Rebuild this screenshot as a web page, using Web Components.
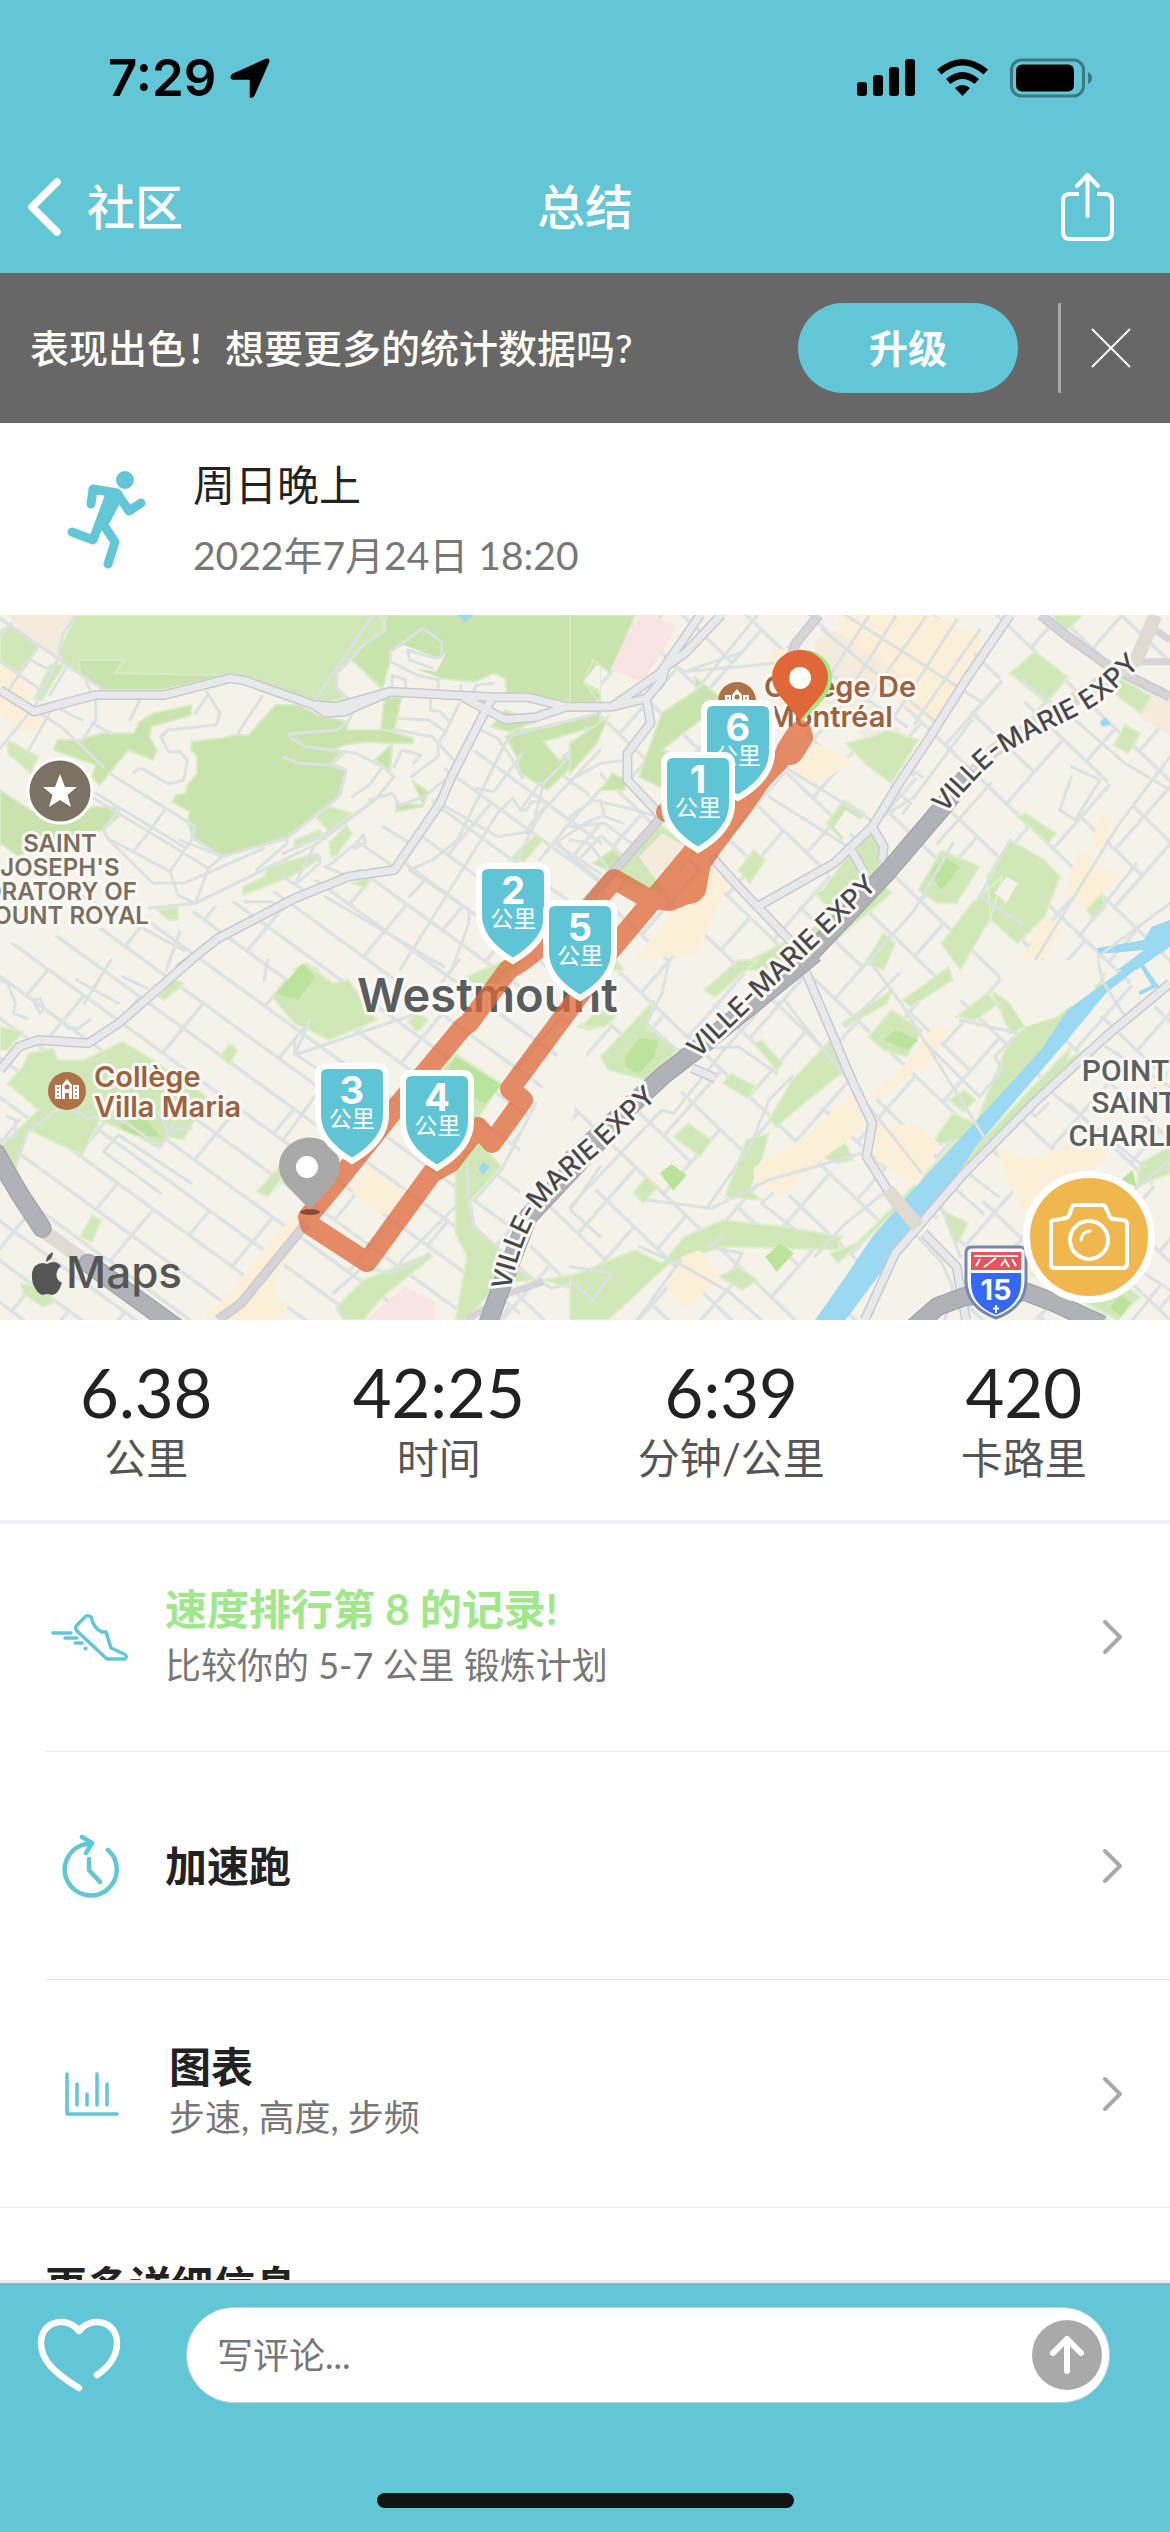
<!DOCTYPE html>
<html lang="zh-CN">
<head>
<meta charset="utf-8">
<title>总结</title>
<style>
  body { margin: 0; background: #fff; font-family: Lato, "Noto Sans CJK SC", sans-serif; color: #222; }
</style>
</head>
<body>
<run-summary></run-summary>
<script>
const define = (name, html) => {
  const t = document.createElement('template');
  t.innerHTML = html;
  customElements.define(name, class extends HTMLElement {
    constructor() {
      super();
      this.attachShadow({ mode: 'open' }).append(t.content.cloneNode(true));
    }
  });
};

define('status-bar', `
<style>
  :host { display: flex; justify-content: space-between; align-items: center; height: 44px; padding: 56px 77px 40px 108px; color: #000; }
  div { display: flex; align-items: center; }
  time { font: 600 51px/44px Inter, sans-serif; }
  .left { gap: 14px; } .right { gap: 22px; }
  svg { display: block; }
</style>
<div class="left"><time>7:29</time>
  <svg width="40" height="40" viewBox="0 0 40 40"><path d="M36 1.500Q39.500.5 38.500 4L24 37q-1.200 2.600-3.500 2V21H2.800Q-.5 19.500 2.800 16.500Z" stroke="#000" stroke-width="1.500"/></svg></div>
<div class="right">
  <svg width="58" height="38" viewBox="0 0 58 38"><rect y="23" width="10" height="14" rx="3"/><rect x="16" y="16" width="10" height="21" rx="3"/><rect x="32" y="8" width="10" height="29" rx="3"/><rect x="48" width="10" height="37" rx="3"/></svg>
  <svg width="51" height="38" viewBox="0 0 51 38"><path d="M0 10.500Q25.500-10.500 51 10.500L46.500 15.500Q25.500-2.500 4.500 15.500ZM9 20Q25.500 6 42 20L37.500 25Q25.500 15 13.500 25ZM18 29Q25.500 23 33 29L25.500 37Z"/></svg>
  <svg width="83" height="40" viewBox="0 0 83 40"><rect x="1.500" y="2" width="72" height="36" rx="10" fill="none" stroke="#3c7983" stroke-width="3"/><rect x="6" y="6.500" width="58" height="27" rx="6"/><path d="M78 14q4 2 4 6t-4 6Z" fill="#3c7983"/></svg>
</div>`);

define('nav-bar', `
<style>
  :host { display: grid; grid-template-columns: 1fr auto 1fr; align-items: center; height: 133px; padding: 0 26px; color: #fff; font-size: 48px; line-height: 60px; font-weight: 500; }
  a { display: flex; align-items: center; gap: 24px; color: inherit; text-decoration: none; }
  h1 { margin: 0; font: inherit; }
  button { justify-self: end; padding: 0 28px 0 0; border: 0; background: none; color: inherit; }
  svg { display: block; fill: none; stroke: currentColor; stroke-linecap: round; stroke-linejoin: round; }
</style>
<a href="#community"><svg width="37" height="60" viewBox="0 0 37 60"><path d="M31 5 6 30l25 25" stroke-width="7.500"/></svg>社区</a>
<h1>总结</h1>
<button aria-label="分享"><svg width="56" height="70" viewBox="0 0 56 70"><path d="M19 22h-9q-7 0-7 7v31q0 7 7 7h35q7 0 7-7V29q0-7-7-7h-8" stroke-width="4" stroke-linecap="butt"/><path d="M27.500 44V4M17 14 27.500 3 38 14" stroke-width="4"/></svg></button>`);

define('upgrade-banner', `
<style>
  :host { display: flex; align-items: center; height: 150px; padding: 0 39px 0 30px; background: #676767; color: #fffef6; font-size: 39px; line-height: 50px; font-weight: 500; }
  p { flex: 1; margin: 0; }
  button { border: 0; padding: 0; background: none; color: #fff; font: inherit; }
  .up { width: 220px; height: 90px; border-radius: 45px; background: #62c6d6; font-weight: 700; margin-right: 40px; }
  .close { height: 90px; padding-left: 30px; border-left: 3px solid #a9a9a9; }
  svg { display: block; }
</style>
<p><slot></slot></p><button class="up">升级</button>
<button class="close" aria-label="关闭"><svg width="40" height="40" viewBox="0 0 40 40" stroke="#fff" stroke-width="2"><path d="M1 1 39 39M39 1 1 39"/></svg></button>`);

define('activity-header', `
<style>
  :host { display: flex; align-items: center; box-sizing: border-box; height: 192px; padding: 2px 66px 0; gap: 45px; background: #fff; }
  svg { display: block; }
  h2, p { margin: 0; font-weight: 400; }
  h2 { font-size: 42px; line-height: 62px; color: #222; }
  p { font-size: 39px; line-height: 62px; margin-top: 8px; color: #777; }
</style>
<svg width="82" height="102" viewBox="66 471 82 102" fill="none" stroke="#62c6d6" stroke-width="9" stroke-linecap="round" stroke-linejoin="round"><circle cx="125" cy="482" r="9" fill="#62c6d6" stroke="none"/><path d="M91 506 93 491 117 495 129 513 141 505M72 534 93 542 109 499M103 526 115 544 108 566"/><path d="M105 493Q119 490 121 501L109 524 100 533 96 530 106 502Z" fill="#62c6d6" stroke-width="2"/></svg>
<div><h2><slot name="title"></slot></h2><p><slot name="date"></slot></p></div>`);

define('km-pin', `
<style>
  :host { position: absolute; display: block; width: 74px; height: 102px; color: #fff; text-align: center; }
  svg { position: absolute; inset: 0; }
  div { position: relative; padding-top: 10px; }
  b { display: block; font: 700 38px/34px Inter, sans-serif; }
  span { display: block; font-size: 23px; line-height: 22px; }
</style>
<svg width="74" height="102" viewBox="0 0 74 102"><path d="M12 3h50q9 0 9 9v40q0 26-34 46Q3 78 3 52V12q0-9 9-9Z" fill="#5fc5d6" stroke="#fff" stroke-width="6"/></svg>
<div><b><slot></slot></b><span>公里</span></div>`);

define('route-map', `
<style>
  :host { display: block; position: relative; height: 705px; overflow: hidden; background: #f5f2ea; }
  .base { position: absolute; inset: 0; width: 100%; height: 100%; }
  .base g path { vector-effect: non-scaling-stroke; }
  .g { fill: #d0e8b8; stroke: #dcefc9; stroke-width: 2; } .d { fill: #c8e3ac; stroke: #d8ecc3; stroke-width: 2; } .b { fill: #bce39c; }
  .y { fill: #fbefd8; } .p { fill: #f8e4e2; } .e { fill: #f4ebdc; } .l { fill: #f5f2ea; } .w { fill: #9bd8f2; }
  .m { fill: none; stroke: #dce1e2; stroke-width: 3; stroke-linejoin: round; stroke-linecap: round; }
  .c, .f { fill: none; stroke-linejoin: round; }
  .c { stroke: #cacacd; stroke-width: 10; } .f { stroke: #e8e9ec; stroke-width: 7; }
  .r2 { stroke: #d5d5d9; }
  .x { fill: none; stroke: #b1b2b8; stroke-width: 17; stroke-linejoin: round; }
  .xc { fill: none; stroke: #9c9da2; stroke-width: 19; stroke-linejoin: round; }
  .t { fill: none; stroke: #dfdbd0; stroke-width: 14; }
  text { font-family: Inter, sans-serif; font-weight: 600; paint-order: stroke; stroke: #faf9f5; stroke-width: 6px; stroke-linejoin: round; }
  .br { font-size: 29px; fill: #9c6240; } .sj { font-size: 24px; fill: #79705f; text-anchor: middle; }
  .ex { font-size: 27px; font-weight: 500; fill: #48484a; }
  .ps { font-family: Roboto, sans-serif; font-weight: 500; font-size: 30px; fill: #5c5f60; text-anchor: middle; }
  .wm { font-size: 47px; fill: #5a5d5e; }
  .ap { font-size: 44px; font-weight: 500; fill: #555; stroke: none; }
  .sh { font-size: 29px; font-weight: 700; fill: #fff; stroke: none; text-anchor: middle; }
  .pin { position: absolute; }
  button { position: absolute; left: 87.4%; top: 556px; width: 132px; height: 132px; padding: 0; border: 7px solid #fff; border-radius: 50%; background: #f1b74f; display: grid; place-items: center; }
</style>
<svg class="base" viewBox="0 0 1170 705" preserveAspectRatio="xMidYMid slice">
  <defs>
    <pattern id="gw" width="190" height="132" patternUnits="userSpaceOnUse" patternTransform="matrix(.81 .59 .64 -.77 20 10)"><path d="M0 2H190M0 34H190M0 66H190M0 100H190M3 0V66M96 66V132M140 0V34M52 100V132" stroke="#dde2e3" stroke-width="3.500"/></pattern>
    <pattern id="ge" width="150" height="130" patternUnits="userSpaceOnUse" patternTransform="matrix(.72 .69 .66 -.75 640 20)"><path d="M0 2H150M0 44H88M34 88H150M3 0V88M50 44V130M88 0V88M120 88V130" stroke="#dde2e3" stroke-width="3.500"/></pattern>
    <path id="e1" d="M944 199C975 165 985 153 1003 140S1060 110 1084 97S1120 70 1158 32"/>
    <path id="e2" d="M698 444 890 260"/>
    <path id="e3" d="M510 676C518 637 529 612 541 594S578 556 600 537L674 467"/>
  </defs>
  <path d="M0 330 180 300 410 240 450 140 560 120 600 200 610 330 520 520 520 705H0Z" fill="url(#gw)"/>
  <path d="M600 0H1170V705H500L560 560 610 330 600 200Z" fill="url(#ge)"/>

  <g transform="matrix(.3827 0 0 .3333 0 -5)">
    <path class="g" d="M165 15H1568V290L1380 255 1325 250 1320 205 1290 190 1240 215 1150 205 1060 165 1020 150 995 235 920 150 880 190 880 235 905 265 820 285 640 215 600 200 420 240 270 240 170 165 150 130 200 15Z"/>
    <path class="d" d="M1010 15H1568V160L1525 220 1568 250V290L1380 255 1325 250 1320 205 1290 190 1240 215 1150 205 1060 165 1020 150 1000 235 920 150 950 105 1000 65ZM205 150H325L300 190 600 195 420 240H270L210 195Z"/>
    <path class="l" d="M1020 125 1055 105 1150 145 1170 120 1140 185 1080 175 1150 205 1060 185 1020 160ZM1568 150 1525 215 1568 240Z"/>
    <path class="w" d="M1195 15H1238L1215 35Z"/>
    <path class="d" d="M500 395 580 385 610 375H650L720 285 780 285 830 315 910 335 905 360H1010L1080 385V400H1020L960 395 900 405 870 420 900 430 870 460 905 480 890 555 750 680 580 740 510 690 490 640 495 605 450 575 460 555 485 550 490 525 515 490V440L500 420Z"/>
    <path class="d" d="M150 390H210L265 370H350L365 335 400 310 500 285V315L395 350 390 380 410 420 400 450 335 420 260 525 240 500 250 465 140 420ZM0 540 80 600 180 640 240 590H300L310 620 270 660 100 700 50 740 0 700ZM1320 380 1350 360 1440 350 1568 310V345L1420 395 1460 450 1540 420 1430 540 1360 490 1350 440ZM1285 350 1320 300 1400 335 1330 365ZM1005 260H1050L1030 360H995ZM980 450 1025 400 1020 480ZM1035 605V580L1105 585 1080 515 1120 545 1105 590Z"/>
    <path class="g" d="M0 60 30 45 100 110 50 190 0 150ZM130 165 170 160 110 270 90 265ZM825 620 860 590 920 610 860 665ZM765 720 770 690 835 660 850 680ZM865 740 860 700 905 645 920 670 880 735ZM635 855V830L690 800 700 770 830 730 840 745 760 800ZM920 820 970 800 955 835ZM410 900 465 890V930H440ZM1330 750 1400 675 1420 690 1370 755ZM20 390 100 440 80 490 20 430ZM1550 1000 1568 990V1080H1500ZM765 1080 800 1060 835 1080Z"/>
    <path class="e" d="M25 15H200L165 70 145 140 110 110 50 60Z"/><path class="y" d="M0 165 90 220 75 280 115 330 100 360 50 370 0 310Z"/>
    <path class="m" d="M0 25 270 240M0 155 120 250M100 110 20 245M200 15 165 70 150 150 90 290 0 415M80 150 130 180M175 170 130 255M225 215 235 240M0 80 30 40M90 300 160 350 270 470M130 310 70 430M215 390 250 330V255M240 340 290 370M160 300 215 330M365 270 340 330M540 245 575 310 565 345 440 360 420 380 440 425H470L490 450 480 510 440 522 370 475 350 485M685 260 635 345 620 375M540 260 510 310"/>
    <path class="m" d="M975 15 820 275M995 15 1008 60 950 105 880 190V235L910 265M920 310 910 335 880 360 755 372 760 385 800 410 930 430 1000 470 1030 500 980 570 860 665 740 730M740 440 780 460 860 465 905 480 885 560 750 685 580 740M500 680 580 740 545 775 510 880 390 895M580 740 470 690M750 685V700L670 780M860 465 890 430M1000 470 965 525 920 560M1105 55 1155 95V140L1140 145 1065 120 1070 150 1130 175M1105 55 1020 125V155L1090 195 1145 210V240M1025 235V195L1060 210V235M1205 225V250M1235 250 1245 225 1290 220M1125 265V300L1150 305 1175 335M1040 325 1120 330 1165 365M1035 360 1130 380 1190 455M1200 280 1165 365 1145 400V440L1075 500M1050 420 1100 435 1080 460M1050 420 1030 470M965 570 1025 550 1045 585 1110 560 1165 505M1250 355 1300 385 1340 450 1365 505"/>
    <path class="m" d="M285 490 510 650 500 690 445 785 465 855 510 880M250 550 480 710M245 565 545 775M310 600 270 660 285 690 400 820 485 818 690 715M430 600 380 680 350 720M290 690 445 785M510 880 830 700 980 570M1000 650 1065 695M850 770 910 800M740 800 800 845M825 700 780 800 775 820M800 740H835V760L775 820M855 770 930 700 950 675 955 700 925 715M940 700 1030 770M1150 580 1300 680 1385 665 1420 600 1568 420M1568 310 1420 350 1340 375 1320 400 1195 690 1130 750 1070 780 1160 850 1250 920 1360 1040M1340 565 1300 610 1170 850 1045 1080M1340 565 1360 600H1375L1390 575H1430M1245 535 1290 545 1365 430M1410 520 1360 600M1568 340 1480 450 1420 520 1390 660 1350 750M1568 540 1480 650 1410 750M1568 620 1530 640 1450 700 1568 790M1530 350V390L1470 440M1460 700 1490 740 1568 810M1520 740 1568 680M1110 810 1070 860M1225 895V940L1180 1080"/>
    <path class="m" d="M200 850 480 1020M470 965 435 1080M640 875H710L740 900M850 860 1160 1070"/>
    <path class="c" d="M0 240 90 305 150 285 250 255H430L600 205 640 212 820 285 880 290 1020 245 1290 262H1380L1480 290 1568 292M820 285 850 308 900 305 1020 245M1210 262 1320 328 1400 322 1480 290M1285 265 1180 500 1150 580 1030 780 910 800 770 865 570 985 465 1080"/>
    <path class="f" d="M0 240 90 305 150 285 250 255H430L600 205 640 212 820 285 880 290 1020 245 1290 262H1380L1480 290 1568 292M820 285 850 308 900 305 1020 245M1210 262 1320 328 1400 322 1480 290M1285 265 1180 500 1150 580 1030 780 910 800 770 865 570 985 465 1080"/>
  </g>
  <g transform="matrix(.3827 0 0 .3333 570 -5)">
    <path class="d" d="M0 15H170L105 190 60 150 35 215 75 275 0 280Z"/><path class="p" d="M180 15H215L280 50 190 215 105 180Z"/>
    <path class="y" d="M700 15H940L1080 80 950 340 720 180ZM525 120 600 110 720 200 600 400 520 330ZM640 400 740 450 640 530 580 490ZM1330 720 1440 800 1350 900 1290 850ZM1390 610 1420 630 1390 720 1360 700ZM360 760 420 810 330 1030 170 1050 270 900ZM1240 920 1290 950 1230 1060 1180 1050Z"/>
    <path class="e" d="M690 60 860 190 760 250 870 370 790 400 650 260 640 90ZM1500 240 1568 250V380L1490 320Z"/>
    <path class="m" d="M720 15 1080 280M660 60 960 340M640 160 880 350M780 20 620 300M850 20 690 320M930 20 740 330M1010 30 820 370M1070 60 900 340"/>
    <path class="d" d="M180 500 240 310 330 240 325 200 390 260 340 330 240 420 330 460 250 540ZM80 540 110 490 150 510 140 540ZM0 400 100 320 70 400 0 490ZM60 760 110 720 160 760 120 790Z"/>
    <path class="g" d="M110 790 230 640 330 720 240 850 150 820ZM1150 190 1215 125 1300 200 1245 280ZM1400 230 1430 200 1520 260 1490 310ZM1450 345 1490 370 1460 430 1420 405ZM720 400 790 380 830 360 910 390 840 520 780 470ZM670 640 715 570 770 610 710 690ZM660 840 790 640 830 720 780 830 690 910 640 850ZM910 840 970 720 1070 770 1010 880 960 880ZM1170 620 1190 610 1270 670 1250 700ZM1090 800 1150 690 1240 750 1280 800 1240 920 1170 1000 1100 930ZM970 1000 1050 880 1130 800 1100 920 1020 1080ZM1260 15H1340L1290 70ZM770 1060 820 970 850 1000 820 1080ZM440 780 480 720 510 750 470 820ZM1350 900 1390 850 1400 890 1370 930ZM0 1080 90 1000 140 1080ZM420 1080 640 950 800 800 840 850 600 1080Z"/>
    <path class="b" d="M940 790 975 740 1020 770 970 840Z"/><path class="l" d="M690 650 720 600 760 630 720 690ZM1110 850 1140 800 1170 820 1140 880Z"/>
    <path class="e" d="M180 740 240 670 320 720 250 850Z"/>
    <path class="w" d="M1375 1015 1500 990 1520 950 1568 930V1010L1480 1080H1430L1500 1020 1385 1032ZM1385 335 1400 322 1412 345 1390 350Z"/>
    <path class="m" d="M490 15 330 240M255 155 300 185 530 160M300 185 440 130M0 620 60 570 170 600 230 620M0 650 90 640 160 700M80 570 90 620 140 640M0 510 80 460 150 450M240 420 300 450 360 400M0 690 50 700 110 790M560 470 800 640M520 560 740 720M1000 700 900 900 760 1080M1100 520 960 700M880 470 920 500M790 640 900 560 1050 330M840 530 890 580 870 610M1180 210 1330 340 1450 460 1568 540M1310 470 1385 510 1320 630 1280 600 1310 500M1568 440 1430 650 1210 1060M1150 690 1070 860 1180 940M1480 760 1330 980M1568 880 1380 1040"/>
    <path class="c" d="M0 290H110L235 190 340 15M110 290 200 265 240 210 250 170 300 130 395 15M200 265 210 340 150 430V510L240 620 110 790 40 880M650 15 590 100 560 200M370 740 440 830 490 890 590 1010 630 1070M1150 15 1040 200 930 400 860 520 790 650 690 760 490 890M790 650 820 710 815 750M735 720 770 790M1230 15 1300 80 1410 170 1568 260"/>
    <path class="f" d="M0 290H110L235 190 340 15M110 290 200 265 240 210 250 170 300 130 395 15M200 265 210 340 150 430V510L240 620M370 740 440 830 490 890 590 1010 630 1070M1150 15 1040 200 930 400 860 520 790 650 690 760 490 890M790 650 820 710 815 750M735 720 770 790"/>
    <path class="f r2" d="M240 620 110 790 40 880M650 15 590 100 560 200M1230 15 1300 80 1410 170 1568 260M1568 90 1530 60M1490 155H1568"/>
    <path class="t" d="M1530 15 1480 150 1110 420 1010 540"/>
    <path class="xc" d="M1050 480 975 590 830 785 620 1040"/><path class="x" d="M1050 480 975 590 830 785 620 1040"/>
  </g>
  <g transform="matrix(.3827 0 0 .3333 0 345)">
    <path class="g" d="M75 280 140 265 150 300H220L320 245 400 300 540 410 480 540 440 530 415 565 360 530 260 480 215 585 75 510 40 630 0 600V560L100 450 50 400 20 370 60 320ZM0 200 60 215 20 270H0ZM710 110 800 10 870 70 910 60 985 180 860 240 770 190ZM415 110 450 55 480 70 430 120ZM1065 185 1090 160 1120 180 1090 215ZM575 290 600 250 620 270 600 315ZM670 695 730 620 740 650 700 710ZM210 830 240 765 265 780 240 845ZM55 970 130 990 140 1030 110 1040 60 1000ZM1040 490 1190 280 1310 370 1240 490 1140 560ZM1190 620 1250 540 1310 620 1230 720 1240 800 1400 960 1300 970 1220 1080H1190L1220 890 1190 820ZM1420 960 1568 930V1030L1500 990ZM880 1040 950 960 1120 880 1130 890 1000 1010 950 1080H900ZM1510 200 1568 160V200L1540 210ZM1200 60 1320 0 1370 0 1290 80Z"/>
    <path class="b" d="M720 100 790 10 825 50 780 120ZM1120 420 1190 290 1310 375 1270 430 1200 400ZM310 500 370 460 420 530 350 525Z"/>
    <path class="p" d="M955 1080 1060 980 1135 1025V1080Z"/><path class="y" d="M920 700 960 610 1010 670 1060 690 1070 770 990 760ZM540 1060 600 1000 700 850 780 750 800 810 720 950V1010L760 1030 720 1080H540Z"/>
    <path class="w" d="M1250 625 1262 605 1280 620 1262 645Z"/>
    <path class="m" d="M0 60 20 70 40 130 35 160 70 175M90 120 105 115 115 145 105 160 90 130M140 165 180 205H205L235 180M200 60 310 130M290 0 220 130M320 50 385 85M700 0 690 60M810 180 770 285 1090 160 1110 130 1200 0M775 285 860 350 740 540M770 240V285M0 550 50 480M0 540 40 530V480L20 470M150 450 75 510 30 640M175 440 230 475 300 465 420 560 470 455M440 510 500 505M415 460 445 525M270 575 310 525 500 670M270 575 420 700M1220 610 1225 740 1240 800 1380 950M1240 720 1310 630 1400 430M870 1000 950 920 1020 940 1100 900 1120 880M1040 930 1050 900 1190 740M1490 750 1568 830M1490 750 1568 620M1500 980 1568 1040M880 1040 900 1080M1568 950 1440 985 1420 970"/>
    <path class="c" d="M0 330 50 260 100 240 230 250 310 190 500 0"/><path class="f" d="M0 330 50 260 100 240 230 250 310 190 500 0"/>
    <path class="c" d="M800 790 630 1030 570 1080"/><path class="f r2" d="M800 790 630 1030 570 1080M1420 965 1330 1000 1220 1080"/>
    <path class="t" d="M110 810 230 910"/>
    <path class="xc" stroke-linecap="round" d="M-10 580 50 700 110 805M230 910 470 1110M1275 1090 1320 950 1380 770 1568 540"/><path class="x" stroke-linecap="round" d="M-10 580 50 700 110 805M230 910 470 1110M1275 1090 1320 950 1380 770 1568 540"/>
  </g>
  <g transform="matrix(.3827 0 0 .3333 570 345)">
    <path class="g" d="M700 910 680 880 750 850 870 710 1010 540 940 560 1000 460 1060 490 1140 260 1110 290 1190 200 1270 170 1310 140 1220 290 1000 570 800 810ZM1060 560 1310 260 1300 300 1400 230 1150 500 1030 660 900 800 880 780ZM0 950 170 870 240 910 300 830 400 780 560 800 710 830 700 870 400 860 260 910 100 1080H0ZM405 710 460 540 520 520 500 600 470 690 500 720ZM520 480 580 360 680 240 720 330 600 440 540 500ZM80 290 220 120 200 200 280 270 200 360 100 330ZM780 230 840 150 920 210 880 290 820 270ZM710 190 840 90 830 130 720 200ZM1010 170 1090 100 1120 130 1060 180ZM990 420 1030 390 1060 420 1030 455ZM270 530 310 490 370 540 340 590ZM165 700 200 650 230 680 190 730ZM400 370 420 340 485 380 465 415ZM480 250 500 240 555 310 540 330ZM390 950 440 920 490 960 450 990ZM350 90 440 0 490 0 380 110ZM870 120 990 20 1000 60 890 140ZM1350 60 1400 40 1380 90ZM1100 90 1150 130 1190 200 1150 220ZM1490 610 1568 560V640L1480 680ZM970 750 1040 790 1000 880ZM1200 940H1400L1490 1010 1430 1080ZM30 200 70 150 120 170 90 200ZM655 590 720 550 740 600 700 610Z"/>
    <path class="b" d="M820 240 850 210 910 240 880 270ZM145 290 180 235 230 240 220 290 180 340 145 320ZM235 640 265 612 305 645 270 692ZM510 890 550 850 585 880 540 935ZM1440 660 1470 630 1480 680ZM1410 1040 1440 1005 1465 1030 1440 1070Z"/>
    <path class="y" d="M780 410 880 310 920 240 960 190 990 210 940 300 790 430ZM800 490 840 500 900 490 965 550 910 680 800 600ZM480 620 600 540 740 400 770 500 600 650 560 710 480 660ZM1110 560 1200 600 1350 530 1400 560V600L1250 700 1180 760ZM290 890 340 870 390 960 300 1050 250 980ZM1190 0H1240L1210 40ZM1510 370 1568 350V400Z"/>
    <path class="l" d="M910 820 980 760 1020 900 1030 1000 900 1080H780L850 890ZM1110 0H1380L1390 60 1270 170 1190 200 1140 110Z"/>
    <path class="w" d="M1480 0 1370 90 1300 150 1230 270 1000 560 880 710 790 830 720 950 640 1080H720L850 880 980 700 1060 560 1300 240 1400 100 1510 0ZM1490 20 1500 15 1540 80 1525 85ZM1485 95 1530 70 1535 80 1490 105Z"/>
    <path class="m" d="M1380 0 1390 60 1450 170M865 130 1100 565M560 120 920 640M780 0 865 130M1020 180 1170 220 1110 290 1130 330 1070 410 930 250M720 200 860 40M0 740 240 450 270 460 410 260 590 30M200 190 280 270 440 260 540 340M200 190 240 100 260 0M360 740 470 560 520 420 580 350M200 720 370 745 520 660 760 580M640 890 720 790 830 690M590 810 500 730 530 700M400 830 360 860 450 880 420 940M0 920 110 940 60 1020 0 960M180 860 300 920 420 1000 500 1080M175 1080 290 900M1010 690 1080 760M1040 640 1120 710M970 740 1020 890M1130 510 1200 450 1215 470 1250 430M1240 380 1500 620M1400 260 1568 380M850 880 900 820 970 905 1000 980 980 1080M1568 600 1400 760M1500 940 1568 990M1540 980 1470 1080"/>
    <path class="c" d="M610 20 740 370 790 490 775 590 830 690M925 820 1010 920 1035 1080M1568 70 1400 230 1220 420 1030 640 850 880 770 1080M320 325 380 355"/><path class="f" d="M610 20 740 370 790 490 775 590 830 690M925 820 1010 920 1035 1080M1568 70 1400 230 1220 420 1030 640 850 880 770 1080M320 325 380 355"/>
    <path class="t" d="M830 690 910 800"/>
    <path class="xc" d="M-5 610 250 340 330 270 640 -20M900 1100 960 1040 1030 1010 1190 995 1270 1030 1390 1095"/><path class="x" d="M-5 610 250 340 330 270 640 -20M900 1100 960 1040 1030 1010 1190 995 1270 1030 1390 1095"/>
  </g>

  <text class="ex"><textPath href="#e1">VILLE-MARIE EXPY</textPath></text>
  <text class="ex"><textPath href="#e2">VILLE-MARIE EXPY</textPath></text>
  <text class="ex"><textPath href="#e3">VILLE-MARIE EXPY</textPath></text>
  <circle cx="60" cy="176" r="32" fill="#7a7262" stroke="#fff" stroke-width="3"/>
  <path d="M60 159 65 172 77 172 67.500 180 71 192 60 185 49 192 52.500 180 43 172 55 172Z" fill="#fff"/>
  <text class="sj" x="60" y="237">SAINT</text><text class="sj" x="60" y="261">JOSEPH'S</text><text class="sj" x="60" y="285">ORATORY OF</text><text class="sj" x="60" y="309">MOUNT ROYAL</text>
  <text class="br" x="94" y="472">Collège</text><text class="br" x="94" y="502">Villa Maria</text>
  <text class="br" x="764" y="82">Collège De</text><text class="br" x="768" y="112">Montréal</text>
  <g id="school"><circle cx="67" cy="476" r="19" fill="#ad7347"/><path d="M55 470h6v14h-6ZM73 470h6v14h-6ZM62 484V470L67 464 72 470V484H69V478H65V484Z" fill="#fff"/><circle cx="67" cy="472" r="2.500" fill="#ad7347"/><path d="M57 473h2M57 477h2M57 481h2M75 473h2M75 477h2M75 481h2" stroke="#ad7347" stroke-width="1.500"/></g>
  <use href="#school" x="670" y="-390"/>
  <text class="ps" x="1134" y="466">POINTE</text><text class="ps" x="1134" y="498">SAINT</text><text class="ps" x="1134" y="531">CHARLES</text>
  <text class="wm" x="357" y="397">Westmount</text>
  <path d="M53 637Q53 644 46 647 46 640 53 637ZM47 649Q55 644 61 651 55 656 57 663 59 667 62 668 58 680 52 680 47 678 43 680 37 679 33 669 30 657 35 651 41 646 47 649Z" fill="#555"/>
  <text class="ap" x="66" y="673">Maps</text>
  <path d="M972 632H1020Q1026 632 1026 638V665Q1026 692 996 703 966 692 966 665V638Q966 632 972 632Z" fill="#fff" stroke="#7387b0" stroke-width="3"/>
  <path d="M971 637H1021V655H971Z" fill="#e9545b"/><path d="M971 658H1021V668Q1021 690 996 700 971 690 971 668Z" fill="#3468f5"/>
  <path d="M974 641H1018M976 651 980 644M1016 651 1012 644M984 652 996 643M1001 651 1005 645 1009 652" stroke="#fff" stroke-width="2" fill="none"/>
  <text class="sh" x="996" y="685">15</text><path d="M996 690v8M993 693.500h6" stroke="#fff" stroke-width="2"/>

  <g opacity=".74" fill="none" stroke="#df6738" stroke-width="20" stroke-linecap="round" stroke-linejoin="round">
    <path d="M801 115 794 130 761 165 738 198 715 228 701 248 696 275 670 286 647 283 614 264 589 294 524 345 508 355 469 408 463 412 394 495 344 558 308 602 310 610 367 647 432 558 450 548 478 512 492 528 523 485 510 474 589 367 610 336 647 292 672 262 705 222M760 150 735 180M735 180 666 197"/>
    <path stroke-width="28" d="M799 122 790 136M692 262 690 275"/>
  </g>
</svg>
<km-pin style="left:59.9%;top:85px">6</km-pin>
<km-pin style="left:56.5%;top:137px">1</km-pin>
<km-pin style="left:40.7%;top:248px">2</km-pin>
<km-pin style="left:46.4%;top:285px">5</km-pin>
<km-pin style="left:34.2%;top:455px">4</km-pin>
<svg class="pin" style="left:23.7%;top:522px" width="66" height="78" viewBox="0 0 66 78"><ellipse cx="33" cy="75" rx="10" ry="3" fill="#8b4a33"/><path d="M33 73C14 52 2 45 2 29a30 28 0 0 1 61 0C63 45 48 55 33 73Z" fill="#a9a9a9"/><circle cx="30" cy="30" r="11" fill="#fff"/></svg>
<km-pin style="left:26.9%;top:448px">3</km-pin>
<svg class="pin" style="left:66%;top:34px" width="62" height="74" viewBox="0 0 62 74"><path d="M31 72C12 50 4 42 4 28a28 27 0 0 1 56 0C60 44 50 52 31 72Z" fill="#a0e884"/><path d="M28 72C12 50 0 42 0 28a28 27 0 0 1 56 0C56 44 44 50 28 72Z" fill="#df6738"/><circle cx="28" cy="29" r="11" fill="#fff"/></svg>
<button aria-label="添加照片"><svg width="82" height="68" viewBox="0 0 82 68" fill="none" stroke="#fff" stroke-width="4" stroke-linecap="round" stroke-linejoin="round"><path d="M3 20Q3 17 7 17L18 15Q21 14 22 10L24 4Q25 2 28 2H54Q57 2 58 5L61 12Q62 15 65 16L76 17Q79 18 79 21V61Q79 65 75 65H7Q3 65 3 61Z"/><circle cx="41" cy="37" r="19"/><path d="M33 37q1-8 9-9" stroke-width="3"/></svg></button>`);

define('stat-item', `
<style>
  :host { flex: 1; display: flex; flex-direction: column; align-items: center; }
  b { font-size: 67px; line-height: 72px; font-weight: 400; color: #222; }
  span { font-size: 42px; line-height: 60px; color: #555; }
</style>
<b><slot></slot></b><span><slot name="unit"></slot></span>`);

define('stat-bar', `
<style>:host { display: flex; height: 164px; padding: 36px 0 0; border-bottom: 4px solid #efeff4; background: #fff; }</style><slot></slot>`);

define('detail-row', `
<style>
  :host { display: block; padding-left: 45px; background: #fff; }
  :host([last]) { padding-left: 0; }
  :host([last]) a { padding: 0 47px 8px 45px; }
  a { display: flex; align-items: center; box-sizing: border-box; height: 228px; border-bottom: 1px solid #e9e9e9; padding-right: 47px; color: inherit; text-decoration: none; }
  .icon { width: 90px; display: grid; place-items: center; margin-right: 30px; }
  .text { flex: 1; display: flex; flex-direction: column; }
  .text { font-size: 42px; line-height: 54px; font-weight: 700; color: #222; }
  ::slotted([slot=sub]) { font-size: 36px; line-height: 56px; font-weight: 400; color: #777; }
  :host([best]) a { padding-bottom: 2px; }
  :host([best]) .text { color: #a0e68a; line-height: 56px; }
  :host([last]) .icon { margin-right: 34px; }
  :host([last]) .icon, :host([last]) .go { padding-top: 8px; }
  :host([last]) ::slotted([slot=sub]) { line-height: 46px; }
</style>
<a href="#details"><span class="icon"><slot name="icon"></slot></span><span class="text"><span><slot></slot></span><slot name="sub"></slot></span>
<svg class="go" width="21" height="36" viewBox="0 0 21 36" fill="none" stroke="#a9a9a9" stroke-width="4" stroke-linecap="round" stroke-linejoin="round"><path d="M3 3 18 18 3 33"/></svg></a>`);

define('comment-bar', `
<style>
  :host { display: block; flex: none; position: relative; height: 249px; border-top: 3px solid #ececec; background: #62c6d6; }
  form { display: flex; align-items: center; gap: 65px; padding: 24px 60px 0 36px; }
  button { padding: 0; border: 0; background: none; }
  svg { display: block; }
  label { flex: 1; display: flex; align-items: center; box-sizing: border-box; height: 96px; padding: 0 7px 0 30px; border: 1px solid #c3d2d6; border-radius: 48px; background: #fff; }
  input { flex: 1; min-width: 0; border: 0; padding: 0; outline: 0; background: none; font: 400 36px/50px Lato, "Noto Sans CJK SC", sans-serif; }
  input::placeholder { color: #777; opacity: 1; }
  .home { width: 417px; height: 15px; margin: 90px auto 0; border-radius: 8px; background: #131313; }
</style>
<form><button type="button" aria-label="赞"><svg width="85" height="74" viewBox="0 0 85 74" fill="none" stroke="#fff" stroke-width="6.500" stroke-linecap="round" stroke-linejoin="round"><path d="M43 70C20 56 5 43 5 25C5 2 32-2 43 13C54-2 81 2 81 25C81 38 74 48 61 57"/></svg></button>
<label><input type="text" placeholder="写评论..." aria-label="写评论"><button type="button" aria-label="发送"><svg width="70" height="70" viewBox="0 0 70 70" fill="none" stroke="#fff" stroke-width="6" stroke-linecap="round" stroke-linejoin="round"><circle cx="35" cy="35" r="35" fill="#a9a9a9" stroke="none"/><path d="M35 51V19M21 33 35 19 49 33"/></svg></button></label></form>
<div class="home"></div>`);

define('run-summary', `
<style>
  :host { display: flex; flex-direction: column; height: 100vh; overflow: hidden; }
  header { flex: none; background: #62c6d6; }
  main { flex: 1; min-height: 0; overflow: hidden; background: #fff; }
  h3 { margin: 0; padding: 48px 45px 0; font-size: 42px; line-height: 60px; font-weight: 700; color: #222; }
  .ic { display: block; fill: none; stroke: #62c6d6; stroke-linecap: round; stroke-linejoin: round; }
</style>
<header><status-bar></status-bar><nav-bar></nav-bar></header>
<main>
  <upgrade-banner>表现出色！想要更多的统计数据吗?</upgrade-banner>
  <activity-header><span slot="title">周日晚上</span><span slot="date">2022年7月24日 18:20</span></activity-header>
  <route-map></route-map>
  <stat-bar>
    <stat-item>6.38<span slot="unit">公里</span></stat-item>
    <stat-item>42:25<span slot="unit">时间</span></stat-item>
    <stat-item>6:39<span slot="unit">分钟/公里</span></stat-item>
    <stat-item>420<span slot="unit">卡路里</span></stat-item>
  </stat-bar>
  <detail-row best><svg slot="icon" class="ic" width="78" height="48" viewBox="0 0 78 48" stroke-width="3.500"><path d="M2 20H20M14 25H26M24 30H31M34 35.500H35M26 12 33 5Q36 1 40 4 43 16 51 19H55L60 35 73 41Q77 43 74 46H56L27 19Q23 15 26 12Z"/></svg>速度排行第 8 的记录!<span slot="sub">比较你的 5-7 公里 锻炼计划</span></detail-row>
  <detail-row><svg slot="icon" class="ic" width="60" height="66" viewBox="0 0 60 66" stroke-width="4.500"><path d="M48 17A26 26 0 1 1 22 12L30 10M22 4 32 10 26 20M29 26V37L40 49"/></svg>加速跑</detail-row>
  <detail-row last><svg slot="icon" class="ic" width="58" height="44" viewBox="-4 0 58 44" stroke-width="3.500"><path d="M2 2V42H52M12 12V33M22 22V33M32 2V33M42 12V33"/></svg>图表<span slot="sub">步速, 高度, 步频</span></detail-row>
  <h3>更多详细信息</h3>
</main>
<comment-bar></comment-bar>`);
</script>
</body>
</html>
